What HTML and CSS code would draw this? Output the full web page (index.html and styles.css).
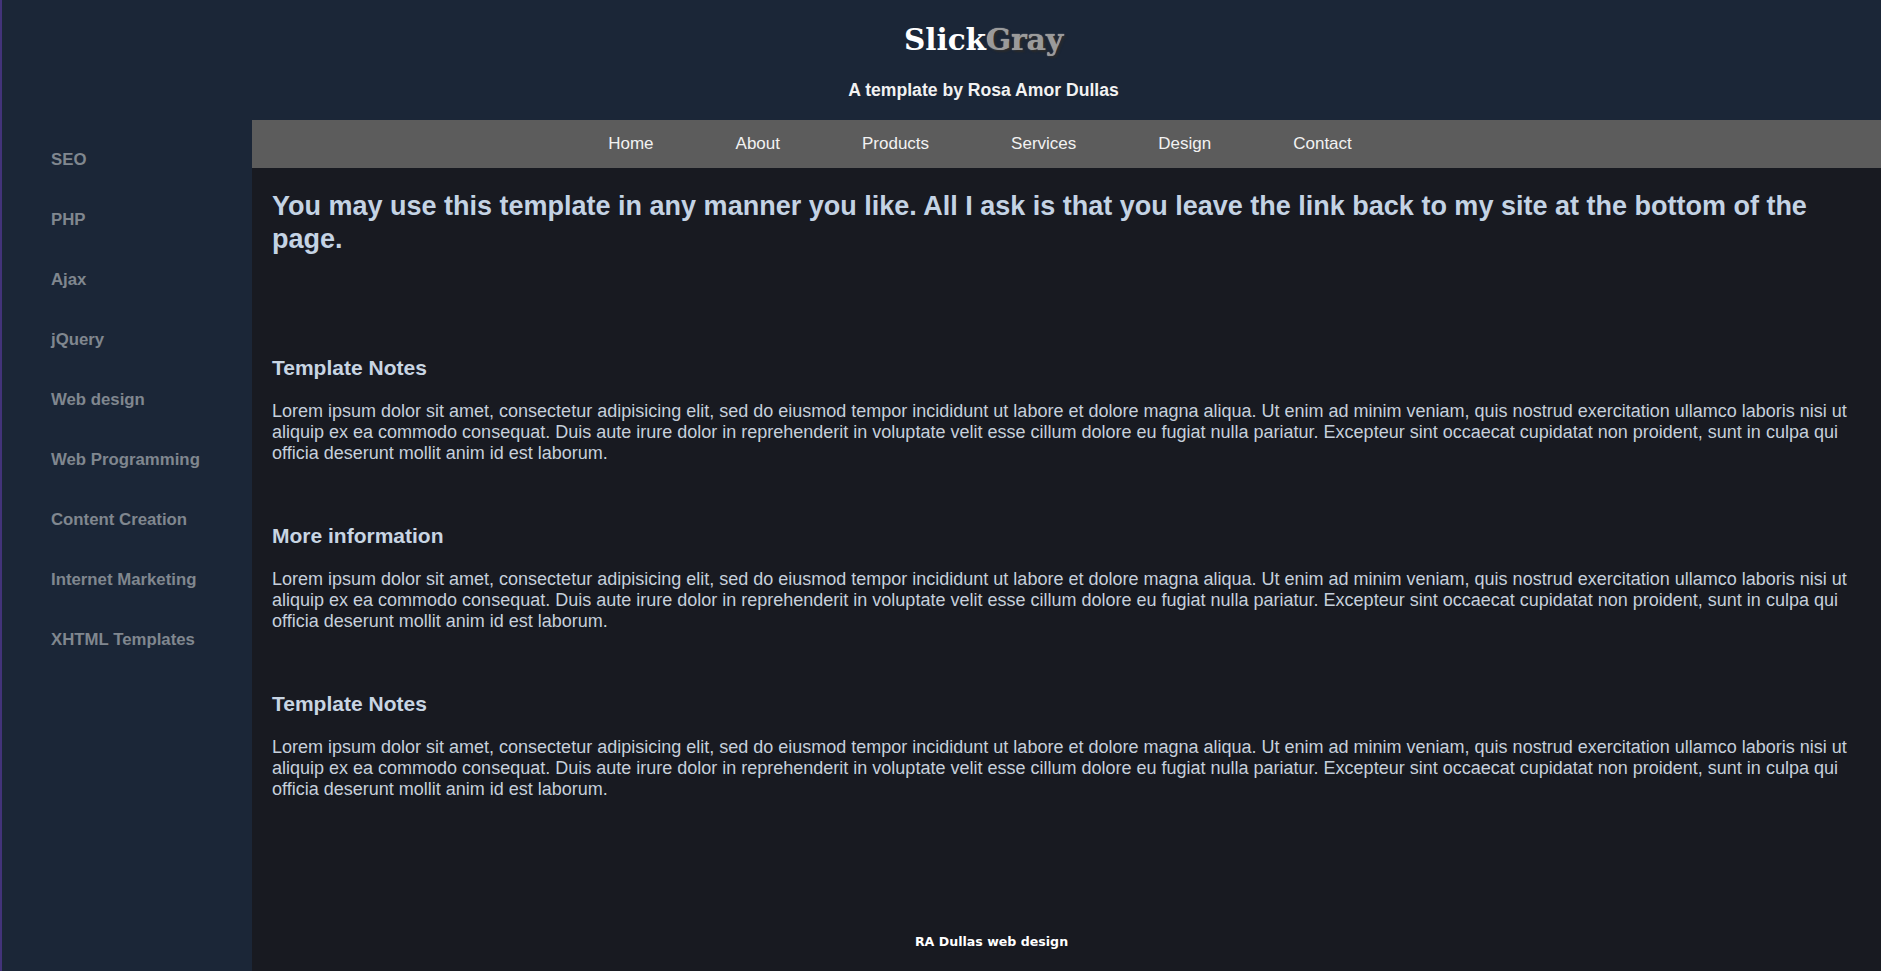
FILE: index.html
```html
<!DOCTYPE html>
<html lang="en">
<head>
<meta charset="utf-8">
<title>SlickGray</title>
<link rel="stylesheet" href="styles.css">
</head>
<body>
<div class="page">
  <header class="masthead">
    <div class="logo"><span class="logo-slick">Slick</span><span class="logo-gray">Gray</span></div>
    <div class="tagline">A template by Rosa Amor Dullas</div>
  </header>
  <div class="layout">
    <aside class="sidebar">
      <ul class="side-menu">
        <li><a href="#">SEO</a></li>
        <li><a href="#">PHP</a></li>
        <li><a href="#">Ajax</a></li>
        <li><a href="#">jQuery</a></li>
        <li><a href="#">Web design</a></li>
        <li><a href="#">Web Programming</a></li>
        <li><a href="#">Content Creation</a></li>
        <li><a href="#">Internet Marketing</a></li>
        <li><a href="#">XHTML Templates</a></li>
      </ul>
    </aside>
    <div class="main">
      <nav class="topnav">
        <ul>
          <li><a href="#">Home</a></li>
          <li><a href="#">About</a></li>
          <li><a href="#">Products</a></li>
          <li><a href="#">Services</a></li>
          <li><a href="#">Design</a></li>
          <li><a href="#">Contact</a></li>
        </ul>
      </nav>
      <main class="content">
        <h2 class="intro">You may use this template in any manner you like. All I ask is that you leave the link back to my site at the bottom of the page.</h2>
        <section class="note">
          <h3>Template Notes</h3>
          <p>Lorem ipsum dolor sit amet, consectetur adipisicing elit, sed do eiusmod tempor incididunt ut labore et dolore magna aliqua. Ut enim ad minim veniam, quis nostrud exercitation ullamco laboris nisi ut aliquip ex ea commodo consequat. Duis aute irure dolor in reprehenderit in voluptate velit esse cillum dolore eu fugiat nulla pariatur. Excepteur sint occaecat cupidatat non proident, sunt in culpa qui officia deserunt mollit anim id est laborum.</p>
        </section>
        <section class="note">
          <h3>More information</h3>
          <p>Lorem ipsum dolor sit amet, consectetur adipisicing elit, sed do eiusmod tempor incididunt ut labore et dolore magna aliqua. Ut enim ad minim veniam, quis nostrud exercitation ullamco laboris nisi ut aliquip ex ea commodo consequat. Duis aute irure dolor in reprehenderit in voluptate velit esse cillum dolore eu fugiat nulla pariatur. Excepteur sint occaecat cupidatat non proident, sunt in culpa qui officia deserunt mollit anim id est laborum.</p>
        </section>
        <section class="note">
          <h3>Template Notes</h3>
          <p>Lorem ipsum dolor sit amet, consectetur adipisicing elit, sed do eiusmod tempor incididunt ut labore et dolore magna aliqua. Ut enim ad minim veniam, quis nostrud exercitation ullamco laboris nisi ut aliquip ex ea commodo consequat. Duis aute irure dolor in reprehenderit in voluptate velit esse cillum dolore eu fugiat nulla pariatur. Excepteur sint occaecat cupidatat non proident, sunt in culpa qui officia deserunt mollit anim id est laborum.</p>
        </section>
      </main>
      <footer class="footer">RA Dullas web design</footer>
    </div>
  </div>
</div>
</body>
</html>
```
FILE: styles.css
```css
html, body {
  margin: 0;
  padding: 0;
}
body {
  background: #1b2637;
  border-left: 2px solid #43337a;
  font-family: "Liberation Sans", Arial, sans-serif;
  min-height: 100vh;
  box-sizing: border-box;
}
.page {
  display: flex;
  flex-direction: column;
  min-height: 100vh;
}
.masthead {
  height: 120px;
  box-sizing: border-box;
  padding: 22px 0 0 84px;
  text-align: center;
}
.logo {
  font-family: "DejaVu Serif", Georgia, serif;
  font-weight: bold;
  font-size: 29.5px;
  line-height: 36px;
}
.logo-slick {
  color: #ffffff;
}
.logo-gray {
  color: #9a9a9a;
  text-shadow: 2px 2px 2px #2a2a2a, 0 0 1px #e0e0e0;
}
.tagline {
  margin-top: 22px;
  font-size: 17.6px;
  line-height: 20px;
  font-weight: bold;
  color: #f2f2f2;
}
.layout {
  flex: 1;
  display: flex;
}
.sidebar {
  width: 250px;
  flex: none;
}
.side-menu {
  list-style: none;
  margin: 0;
  padding: 10px 0 0 49px;
}
.side-menu li {
  height: 60px;
  line-height: 60px;
}
.side-menu a {
  font-size: 16.8px;
  font-weight: bold;
  color: #80878f;
  text-decoration: none;
}
.main {
  flex: 1;
  display: flex;
  flex-direction: column;
  background: #181a21;
}
.topnav {
  height: 48px;
  background: #5c5c5c;
}
.topnav ul {
  display: flex;
  justify-content: center;
  align-items: center;
  height: 100%;
  list-style: none;
  margin: 0;
  padding: 0 173px 0 0;
}
.topnav a {
  display: block;
  padding: 0 41px;
  font-size: 17px;
  color: #f2f2f2;
  text-decoration: none;
}
.content {
  flex: 1;
  padding: 22px 20px 0;
  color: #c6d0dc;
}
.intro {
  margin: 0 0 101px;
  font-size: 27px;
  line-height: 32.5px;
  font-weight: bold;
  color: #c4d3e4;
}
.note {
  margin-bottom: 60px;
}
.note h3 {
  margin: 0 0 21px;
  font-size: 21px;
  font-weight: bold;
  color: #c8d5e3;
}
.note p {
  margin: 0;
  font-size: 18px;
  color: #c6d0dc;
}
.footer {
  padding: 0 150px 22px 0;
  text-align: center;
  font-family: "DejaVu Sans", Verdana, sans-serif;
  font-weight: bold;
  font-size: 12.6px;
  line-height: 15px;
  color: #ffffff;
}
```
